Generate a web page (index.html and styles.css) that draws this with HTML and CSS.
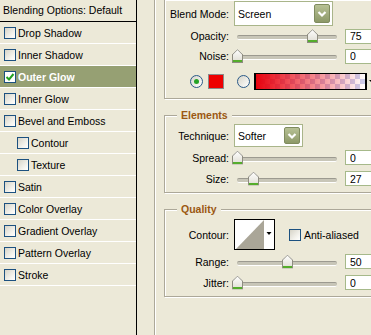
FILE: index.html
```html
<!doctype html>
<html lang="en">
    <head>
        <meta charset="UTF-8" />
        <meta name="viewport" content="width=device-width, initial-scale=1.0" />
        <title>Layer Style - Outer Glow</title>
        <link rel="stylesheet" href="styles.css">
    </head>
    <body>
        <div class="dialog">
            <div class="styles-list">
                <div class="list-head">Blending Options: Default</div>
                <ul class="layers">
                    <li><span class="check"></span>Drop Shadow</li>
                    <li><span class="check"></span>Inner Shadow</li>
                    <li class="active">
                        <span class="check">
                            <svg width="10" height="10" viewBox="0 0 10 10"><polyline points="1.5,5 4,7.5 8.5,2" fill="none" stroke="#21a121" stroke-width="2"/></svg>
                        </span>Outer Glow
                    </li>
                    <li><span class="check"></span>Inner Glow</li>
                    <li><span class="check"></span>Bevel and Emboss</li>
                    <li class="sub"><span class="check"></span>Contour</li>
                    <li class="sub"><span class="check"></span>Texture</li>
                    <li><span class="check"></span>Satin</li>
                    <li><span class="check"></span>Color Overlay</li>
                    <li><span class="check"></span>Gradient Overlay</li>
                    <li><span class="check"></span>Pattern Overlay</li>
                    <li><span class="check"></span>Stroke</li>
                </ul>
            </div>

            <div class="divider"></div>

            <div class="options">
                <!-- Structure (top of the box is scrolled out of view) -->
                <section class="group group-cut">
                    <div class="row row-select">
                        <span class="label">Blend Mode:</span>
                        <div class="select select-blend">
                            <span class="select-text">Screen</span>
                            <span class="drop"><svg width="14" height="18" viewBox="0 0 14 18"><polyline points="3.5,7 7,10.5 10.5,7" fill="none" stroke="#fff" stroke-width="2.2"/></svg></span>
                        </div>
                    </div>
                    <div class="row row-slider">
                        <span class="label">Opacity:</span>
                        <div class="slider"><span class="thumb" style="left:75%"></span></div>
                        <input class="num" type="text" value="75">
                    </div>
                    <div class="row row-slider">
                        <span class="label">Noise:</span>
                        <div class="slider"><span class="thumb" style="left:0%"></span></div>
                        <input class="num" type="text" value="0">
                    </div>
                    <div class="color-row">
                        <span class="radio on"></span>
                        <span class="swatch"></span>
                        <span class="radio"></span>
                        <span class="gradient"></span>
                        <span class="gradient-arrow"></span>
                    </div>
                </section>

                <section class="group">
                    <h3 class="legend">Elements</h3>
                    <div class="row row-technique">
                        <span class="label">Technique:</span>
                        <div class="select select-technique">
                            <span class="select-text">Softer</span>
                            <span class="drop"><svg width="14" height="18" viewBox="0 0 14 18"><polyline points="3.5,7 7,10.5 10.5,7" fill="none" stroke="#fff" stroke-width="2.2"/></svg></span>
                        </div>
                    </div>
                    <div class="row row-slider tall">
                        <span class="label">Spread:</span>
                        <div class="slider"><span class="thumb" style="left:0%"></span></div>
                        <input class="num" type="text" value="0">
                    </div>
                    <div class="row row-slider tall">
                        <span class="label">Size:</span>
                        <div class="slider"><span class="thumb" style="left:16%"></span></div>
                        <input class="num" type="text" value="27">
                    </div>
                </section>

                <section class="group group-quality">
                    <h3 class="legend">Quality</h3>
                    <div class="row row-contour">
                        <span class="label">Contour:</span>
                        <div class="contour-pick">
                            <svg width="39" height="29" viewBox="0 0 39 29">
                                <polygon points="1,29 29,0 29,29" fill="#aaa698"/>
                                <polygon points="31.5,12 36.5,12 34,15" fill="#000"/>
                            </svg>
                        </div>
                        <span class="check"></span>
                        <span class="check-label">Anti-aliased</span>
                    </div>
                    <div class="row row-slider tall first">
                        <span class="label">Range:</span>
                        <div class="slider"><span class="thumb" style="left:50%"></span></div>
                        <input class="num" type="text" value="50">
                    </div>
                    <div class="row row-slider tall">
                        <span class="label">Jitter:</span>
                        <div class="slider"><span class="thumb" style="left:0%"></span></div>
                        <input class="num" type="text" value="0">
                    </div>
                </section>
            </div>
        </div>
    </body>
</html>
```

FILE: styles.css
```css
* {
    box-sizing: border-box;
}
body {
    margin: 0;
    width: 371px;
    height: 335px;
    overflow: hidden;
    background-color: #ece9d8;
    font-family: "Liberation Sans", Arial, sans-serif;
    font-size: 10.5px;
    color: #000;
}
.dialog {
    display: flex;
    height: 335px;
}

/* left list of effects */
.styles-list {
    flex: none;
    width: 137px;
    border-right: 1px solid #000;
}
.list-head {
    height: 22px;
    line-height: 21px;
    padding-left: 3px;
    border-bottom: 1px solid #000;
}
.layers {
    list-style: none;
    margin: 0;
    padding: 0;
}
.layers li {
    height: 22px;
    display: flex;
    align-items: center;
    gap: 2px;
    padding-left: 4px;
    border-bottom: 1px solid #fff;
}
.layers li.sub {
    padding-left: 17px;
}
.layers li.active {
    background-color: #96a073;
    color: #fff;
    font-weight: bold;
}
.check {
    flex: none;
    width: 12px;
    height: 12px;
    border: 1px solid #1c5180;
    background: linear-gradient(135deg, #d6d4c8, #f6f5f0 70%, #fff);
    display: flex;
    align-items: center;
    justify-content: center;
}
.active .check {
    background: #fff;
}

.divider {
    flex: none;
    width: 18px;
    border-right: 1px solid #aca899;
    box-shadow: 1px 0 0 #fff;
}

/* right side option groups, cut off by the window edge */
.options {
    flex: 1;
    min-width: 0;
    overflow: hidden;
    padding-left: 9px;
}
.group {
    width: 240px;
    border: 1px solid #aca899;
    box-shadow: inset 1px 1px 0 #fff, 1px 1px 0 #fff;
    margin-top: 16px;
    padding-bottom: 3px;
}
.group-cut {
    margin-top: 0;
    border-top: none;
    padding-top: 1px;
    padding-bottom: 8px;
}
.legend {
    display: block;
    width: max-content;
    margin: -7px 0 0 12px;
    padding: 0 4px;
    background-color: #ece9d8;
    line-height: 12px;
    font-size: 10.5px;
    font-weight: bold;
    color: #9b5812;
}
.row {
    display: flex;
    align-items: center;
    height: 20px;
}
.row.tall {
    height: 21px;
}
.label {
    flex: none;
    width: 64px;
    text-align: right;
    margin-right: 5px;
}
.row-select {
    height: 25px;
}
.row-technique {
    height: 23px;
    margin-top: 3px;
}
.row-contour {
    height: 31px;
    margin-top: 4px;
}
.row-slider.first {
    margin-top: 1px;
}

.select {
    height: 100%;
    display: flex;
    align-items: center;
    justify-content: space-between;
    padding: 2px;
    background-color: #fff;
    border: 1px solid #a9b58a;
}
.select-blend {
    width: 99px;
}
.select-technique {
    width: 69px;
}
.select-text {
    padding-left: 1px;
}
.drop {
    width: 16px;
    height: 100%;
    display: flex;
    align-items: center;
    justify-content: center;
    border: 1px solid #7f8b5e;
    border-radius: 2px;
    background: linear-gradient(#b7c195, #8d9968);
}

.slider {
    position: relative;
    flex: none;
    width: 100px;
    height: 14px;
    margin-left: 3px;
}
.slider::before {
    content: "";
    position: absolute;
    left: 0;
    right: 0;
    top: 6px;
    height: 3px;
    border-radius: 2px;
    border-top: 1px solid #9c9a90;
    border-bottom: 1px solid #fff;
    background-color: #c8c6b8;
}
.thumb {
    position: absolute;
    top: 0;
    width: 11px;
    height: 14px;
    margin-left: -5px;
    background: linear-gradient(#fff, #dddbd0);
    clip-path: polygon(50% 0, 100% 38%, 100% 100%, 0 100%, 0 38%);
}
.thumb::before {
    content: "";
    position: absolute;
    inset: 0;
    background-color: #8e8c80;
    clip-path: polygon(50% 0, 100% 38%, 100% 100%, 0 100%, 0 38%, 1px 38%, 1px calc(100% - 1px), calc(100% - 1px) calc(100% - 1px), calc(100% - 1px) 40%, 50% 1px, 1px 40%, 0 38%);
}
.thumb::after {
    content: "";
    position: absolute;
    left: 1px;
    right: 1px;
    bottom: 1px;
    height: 2px;
    background-color: #55ad2c;
}
.num {
    flex: none;
    width: 40px;
    height: 15px;
    margin-left: 8px;
    padding: 0 0 0 4px;
    border: 1px solid #a6b98a;
    background-color: #fff;
    font: inherit;
    color: #000;
}

.color-row {
    display: flex;
    align-items: center;
    height: 17px;
    margin-top: 7px;
    padding-left: 25px;
}
.radio {
    flex: none;
    width: 13px;
    height: 13px;
    border-radius: 50%;
    border: 1px solid #2a5a88;
    background: linear-gradient(135deg, #d6d4c8, #fff);
    display: flex;
    align-items: center;
    justify-content: center;
}
.radio.on::before {
    content: "";
    width: 5px;
    height: 5px;
    border-radius: 50%;
    background-color: #25a325;
}
.swatch {
    flex: none;
    width: 16px;
    height: 15px;
    margin: 0 13px 0 5px;
    border: 1px solid #8a8a8a;
    background-color: #ee0000;
}
.gradient {
    flex: none;
    width: 113px;
    height: 17px;
    margin-left: 4px;
    border: 1px solid #000;
    box-shadow: inset 1px 0 0 #000, inset -1px 0 0 #000;
    background:
        linear-gradient(to right, #e8000c, rgba(232, 0, 12, 0)),
        repeating-conic-gradient(#fff 0 25%, #ccd0ee 0 50%) 0 0 / 10px 10px;
}
.gradient-arrow {
    flex: none;
    margin-left: 2px;
    width: 0;
    height: 0;
    border-left: 3px solid transparent;
    border-right: 3px solid transparent;
    border-top: 3px solid #000;
}

.contour-pick {
    flex: none;
    width: 41px;
    height: 31px;
    border: 1px solid #000;
    background-color: #fff;
    display: flex;
}
.row-contour .check {
    margin-left: 14px;
    margin-right: 3px;
}
```
